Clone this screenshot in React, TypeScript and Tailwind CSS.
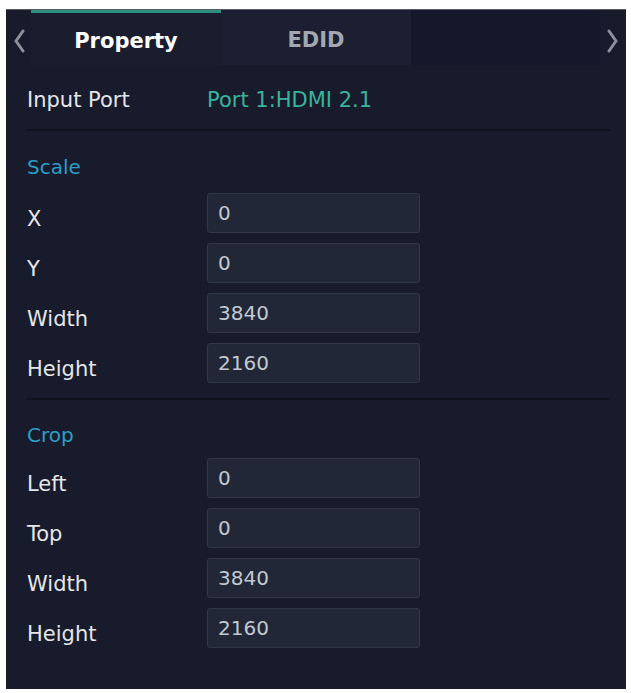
import React from "react";

const font = { fontFamily: '"DejaVu Sans", Verdana, sans-serif' };

function Row({ label, value }: { label: string; value: string }) {
  return (
    <div className="flex items-center h-[40px]">
      <div className="w-[180px] text-[21px] leading-none text-[#e4e6ea] pt-[12px]">{label}</div>
      <div className="w-[213px] h-[40px] rounded-[3px] border border-[#303848] bg-[#212736] flex items-center pl-[10px] text-[20px] leading-none text-[#c3c8d1]">
        {value}
      </div>
    </div>
  );
}

export default function App() {
  return (
    <div className="w-[631px] h-[693px] bg-white pt-[9px] pl-[6px] pr-[5px] pb-[4px]" style={font}>
      <div className="w-full h-full bg-[#181b2b] flex flex-col border-t border-[#5a5d66]">
        {/* tab bar */}
        <div className="flex h-[55px] shrink-0">
          <div className="w-[25px] flex items-center justify-center pt-[6px]">
            <svg width="12" height="24" viewBox="0 0 12 24">
              <path d="M10 2 L3 12 L10 22" stroke="#8d919c" strokeWidth="3" fill="none" strokeLinecap="round" strokeLinejoin="round" />
            </svg>
          </div>
          <div className="w-[190px] flex flex-col bg-[#1a1d2e]">
            <div className="h-[3px] bg-[#2d8f80]" />
            <div className="flex-1 flex items-center justify-center text-[21px] font-bold text-white leading-none pt-[4px]">
              Property
            </div>
          </div>
          <div className="w-[190px] flex items-center justify-center bg-[#1c1f31] text-[21px] font-bold text-[#a3a7b0] leading-none pt-[6px]">
            EDID
          </div>
          <div className="flex-1 bg-[#15172a]" />
          <div className="w-[26px] flex items-center justify-center bg-[#181b2b] pt-[6px]">
            <svg width="12" height="24" viewBox="0 0 12 24">
              <path d="M2 2 L9 12 L2 22" stroke="#8d919c" strokeWidth="3" fill="none" strokeLinecap="round" strokeLinejoin="round" />
            </svg>
          </div>
        </div>

        <div className="pl-[21px] pr-[16px] flex flex-col">
          <div className="mt-[17px] h-[36px] flex items-center">
            <div className="w-[180px] text-[21px] leading-none text-[#e4e6ea]">Input Port</div>
            <div className="text-[21px] leading-none text-[#38b49c]">Port 1:HDMI 2.1</div>
          </div>
          <div className="mt-[11px] h-[2px] bg-[#10121e]" />

          <div className="mt-[21px] h-[30px] flex items-center text-[20px] leading-none text-[#2a9ec6]">Scale</div>
          <div className="mt-[11px] flex flex-col gap-[10px]">
            <Row label="X" value="0" />
            <Row label="Y" value="0" />
            <Row label="Width" value="3840" />
            <Row label="Height" value="2160" />
          </div>
          <div className="mt-[15px] h-[2px] bg-[#10121e]" />

          <div className="mt-[20px] h-[30px] flex items-center text-[20px] leading-none text-[#2a9ec6]">Crop</div>
          <div className="mt-[8px] flex flex-col gap-[10px]">
            <Row label="Left" value="0" />
            <Row label="Top" value="0" />
            <Row label="Width" value="3840" />
            <Row label="Height" value="2160" />
          </div>
        </div>
      </div>
    </div>
  );
}
